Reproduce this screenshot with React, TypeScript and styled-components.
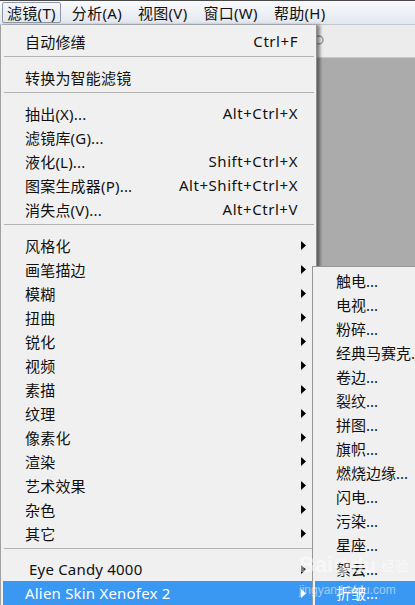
import * as React from 'react';
import styled, { createGlobalStyle } from 'styled-components';

const GlobalStyle = createGlobalStyle`
  html, body {
    margin: 0;
    padding: 0;
    background: #ababab;
  }
  body {
    font-family: "Noto Sans", "Noto Sans CJK SC", sans-serif;
    color: #111;
  }
`;

type Item =
    | { kind: 'sep' }
    | { kind: 'item'; label: string; shortcut?: string; sub?: boolean; active?: boolean; indent?: number };

const mainItems: Item[] = [
    { kind: 'item', label: '自动修缮', shortcut: 'Ctrl+F' },
    { kind: 'sep' },
    { kind: 'item', label: '转换为智能滤镜' },
    { kind: 'sep' },
    { kind: 'item', label: '抽出(X)...', shortcut: 'Alt+Ctrl+X' },
    { kind: 'item', label: '滤镜库(G)...' },
    { kind: 'item', label: '液化(L)...', shortcut: 'Shift+Ctrl+X' },
    { kind: 'item', label: '图案生成器(P)...', shortcut: 'Alt+Shift+Ctrl+X' },
    { kind: 'item', label: '消失点(V)...', shortcut: 'Alt+Ctrl+V' },
    { kind: 'sep' },
    { kind: 'item', label: '风格化', sub: true },
    { kind: 'item', label: '画笔描边', sub: true },
    { kind: 'item', label: '模糊', sub: true },
    { kind: 'item', label: '扭曲', sub: true },
    { kind: 'item', label: '锐化', sub: true },
    { kind: 'item', label: '视频', sub: true },
    { kind: 'item', label: '素描', sub: true },
    { kind: 'item', label: '纹理', sub: true },
    { kind: 'item', label: '像素化', sub: true },
    { kind: 'item', label: '渲染', sub: true },
    { kind: 'item', label: '艺术效果', sub: true },
    { kind: 'item', label: '杂色', sub: true },
    { kind: 'item', label: '其它', sub: true },
    { kind: 'sep' },
    { kind: 'item', label: 'Eye Candy 4000', sub: true, indent: 4 },
    { kind: 'item', label: 'Alien Skin Xenofex 2', sub: true, active: true },
];

const subItems = [
    '触电...', '电视...', '粉碎...', '经典马赛克...', '卷边...', '裂纹...', '拼图...',
    '旗帜...', '燃烧边缘...', '闪电...', '污染...', '星座...', '絮云...', '折皱...',
];

const topMenus = ['滤镜(T)', '分析(A)', '视图(V)', '窗口(W)', '帮助(H)'];

const SubArrow = ({ light }: { light?: boolean }) => (
    <svg width="5" height="9" viewBox="0 0 5 9">
        <path d="M0 0 L5 4.5 L0 9 Z" fill={light ? '#fff' : '#000'} />
    </svg>
);

const App = () => {
    return (
        <Screen>
            <GlobalStyle />
            <MenuBar>
                {topMenus.map((m, i) => (
                    <TopItem key={m} open={i === 0}>{m}</TopItem>
                ))}
            </MenuBar>
            <Workspace>
                <MainMenu>
                    {mainItems.map((it, i) =>
                        it.kind === 'sep' ? (
                            <Separator key={i} />
                        ) : (
                            <Row key={i} active={it.active} indent={it.indent || 0}>
                                <Label>{it.label}</Label>
                                {it.shortcut && <Shortcut>{it.shortcut}</Shortcut>}
                                <ArrowSlot>{it.sub && <SubArrow light={it.active} />}</ArrowSlot>
                            </Row>
                        )
                    )}
                </MainMenu>
                <Backdrop>
                    <OptionsBar>
                        <ToolIcon width="10" height="12" viewBox="0 0 10 12">
                            <circle cx="5" cy="6" r="4" fill="none" stroke="#9a9a9a" strokeWidth="1.5" />
                        </ToolIcon>
                    </OptionsBar>
                    <Canvas />
                </Backdrop>
                <SubMenu>
                    {subItems.map((s, i) => (
                        <SubRow key={s} active={i === subItems.length - 1}>{s}</SubRow>
                    ))}
                </SubMenu>
                <Watermark>
                    <MarkLogo>
                        Bai
                        <svg width="16" height="18" viewBox="0 0 16 18">
                            <ellipse cx="3" cy="6" rx="2" ry="2.6" fill="#fff" />
                            <ellipse cx="6.5" cy="2.5" rx="2" ry="2.4" fill="#fff" />
                            <ellipse cx="10.5" cy="2.5" rx="2" ry="2.4" fill="#fff" />
                            <ellipse cx="13.5" cy="6.5" rx="2" ry="2.6" fill="#fff" />
                            <path d="M8.5 7 C5 7 3 12 4 15 C5 17 12 17 13 15 C14 12 12 7 8.5 7 Z" fill="#fff" />
                        </svg>
                        <MarkSmall>du</MarkSmall>
                        <MarkCn>经验</MarkCn>
                    </MarkLogo>
                    <MarkUrl>jingyan.baidu.com</MarkUrl>
                </Watermark>
            </Workspace>
        </Screen>
    );
};

const Screen = styled.div`
  width: 415px;
  height: 605px;
  overflow: hidden;
  display: grid;
  grid-template-rows: 25px 1fr;
  font-size: 15px;
`;

const MenuBar = styled.div`
  display: flex;
  align-items: center;
  gap: 6px;
  padding: 0 2px;
  border-top: 1px solid #4a4a4a;
  border-bottom: 1px solid #c3c8cf;
  background: linear-gradient(#f9fafc, #e2e7ef);
  box-sizing: border-box;
`;

const TopItem = styled.div<{ open?: boolean }>`
  height: 21px;
  line-height: 20px;
  padding: 0 4px;
  box-sizing: border-box;
  border: 1px solid ${p => (p.open ? '#8c98a6' : 'transparent')};
  border-radius: 2px;
  background: ${p => (p.open ? 'linear-gradient(#f4f6f9, #e4e9f0)' : 'transparent')};
  color: #111;
  letter-spacing: 0.3px;
  white-space: nowrap;
`;

const Workspace = styled.div`
  position: relative;
  display: flex;
  min-height: 0;
`;

const MainMenu = styled.div`
  position: relative;
  z-index: 1;
  width: 317px;
  flex: none;
  box-sizing: border-box;
  padding-top: 4px;
  background: #f0f0f0;
  border-left: 1px solid #a0a0a0;
  border-right: 1px solid #8f8f8f;
  box-shadow: 3px 0 3px rgba(0, 0, 0, 0.45);
`;

const Row = styled.div<{ active?: boolean; indent: number }>`
  display: flex;
  align-items: center;
  height: 24px;
  margin: 0 4px 0 2px;
  padding: 0 6px 0 ${p => 22 + p.indent}px;
  background: ${p => (p.active ? '#3a97f2' : 'transparent')};
  color: ${p => (p.active ? '#fff' : '#111')};
  white-space: nowrap;
`;

const Label = styled.span`
  flex: 1;
  letter-spacing: 0.2px;
`;

const Shortcut = styled.span`
  letter-spacing: 0.55px;
`;

const ArrowSlot = styled.span`
  width: 8px;
  display: flex;
  justify-content: flex-end;
  align-items: center;
`;

const Separator = styled.div`
  height: 1px;
  margin: 3px 2px 8px 3px;
  background: #b4b4b4;
`;

const Backdrop = styled.div`
  flex: 1;
  display: flex;
  flex-direction: column;
`;

const OptionsBar = styled.div`
  height: 33px;
  flex: none;
  display: flex;
  align-items: center;
  background: #ececec;
  border-bottom: 1px solid #c8c8c8;
  box-sizing: border-box;
`;

const ToolIcon = styled.svg`
  margin-left: -3px;
  margin-top: -2px;
`;

const Canvas = styled.div`
  flex: 1;
  background: #ababab;
`;

const SubMenu = styled.div`
  position: absolute;
  z-index: 2;
  left: 312px;
  top: 241px;
  width: 125px;
  padding-top: 2px;
  background: #f0f0f0;
  border: 1px solid #979797;
  border-bottom: none;
`;

const SubRow = styled.div<{ active?: boolean }>`
  height: 24px;
  line-height: 24px;
  margin-left: 2px;
  padding-left: 21px;
  white-space: nowrap;
  background: ${p => (p.active ? '#3a97f2' : 'transparent')};
  color: ${p => (p.active ? '#fff' : '#111')};
`;

const Watermark = styled.div`
  position: absolute;
  z-index: 3;
  left: 299px;
  top: 528px;
  opacity: 0.5;
  color: #fff;
  pointer-events: none;
`;

const MarkLogo = styled.div`
  display: flex;
  align-items: flex-end;
  gap: 1px;
  font-family: "Liberation Sans", sans-serif;
  font-weight: bold;
  font-size: 22px;
  line-height: 24px;
`;

const MarkSmall = styled.span`
  font-size: 20px;
`;

const MarkCn = styled.span`
  margin-left: 4px;
  font-family: "Noto Sans CJK SC", sans-serif;
  font-size: 14px;
  font-weight: normal;
`;

const MarkUrl = styled.div`
  font-family: "Liberation Sans", sans-serif;
  font-size: 12px;
  margin-top: 6px;
`;

export default App;
